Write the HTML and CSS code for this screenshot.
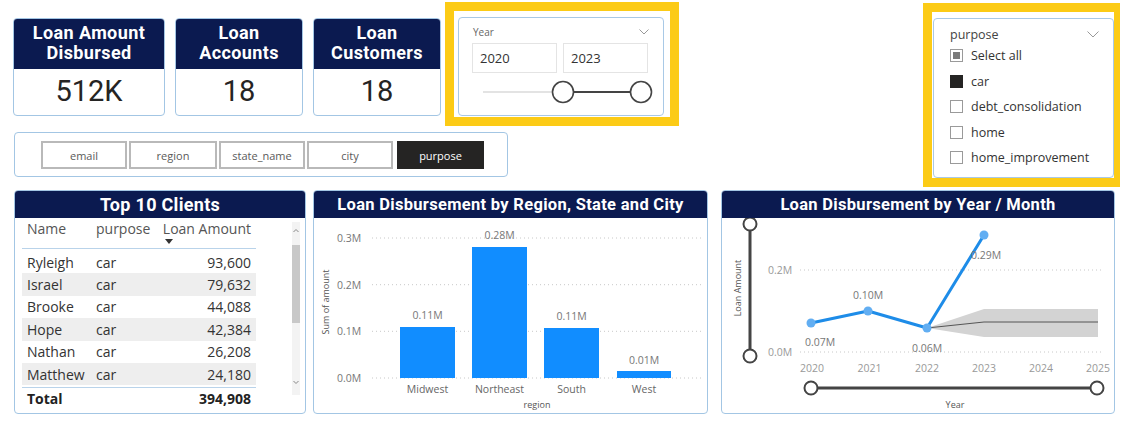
FILE: index.html
```html
<!DOCTYPE html>
<html>
<head>
<meta charset="utf-8">
<link rel="stylesheet" href="styles.css">
</head>
<body>
<div class="page">
  <div class="top">
    <div class="left">
      <div class="row1">
        <div class="kpis">
          <div class="kpi kpi-wide"><div class="kpi-head">Loan Amount<br>Disbursed</div><div class="kpi-val">512K</div></div>
          <div class="kpi"><div class="kpi-head">Loan<br>Accounts</div><div class="kpi-val">18</div></div>
          <div class="kpi"><div class="kpi-head">Loan<br>Customers</div><div class="kpi-val">18</div></div>
        </div>
        <div class="hl hl-year">
          <div class="slicer year-slicer">
            <div class="sl-head"><span class="year-label">Year</span><svg class="chev" width="10" height="6" viewBox="0 0 10 6"><path d="M0.5 0.5 L5 5 L9.5 0.5"/></svg></div>
            <div class="inputs"><div class="inp">2020</div><div class="inp">2023</div></div>
            <svg class="range" width="186" height="30" viewBox="0 0 186 30">
              <line class="track" x1="11" y1="19" x2="91" y2="19"/>
              <line class="sel" x1="91" y1="19" x2="169" y2="19"/>
              <circle class="handle" cx="91" cy="19" r="10.5"/>
              <circle class="handle" cx="169" cy="19" r="10.5"/>
            </svg>
          </div>
        </div>
      </div>
      <div class="btnbar">
        <span class="btn w86">email</span>
        <span class="btn w88">region</span>
        <span class="btn w86">state_name</span>
        <span class="btn w86">city</span>
        <span class="btn w87 btn-on">purpose</span>
      </div>
    </div>
    <div class="hl hl-purpose">
      <div class="slicer purpose-slicer">
        <div class="sl-head"><span class="p-label">purpose</span><svg class="chev" width="12" height="7" viewBox="0 0 12 7"><path d="M0.5 0.5 L6 6 L11.5 0.5"/></svg></div>
        <div class="item"><span class="cb cb-part"></span>Select all</div>
        <div class="item"><span class="cb cb-on"></span>car</div>
        <div class="item"><span class="cb"></span>debt_consolidation</div>
        <div class="item"><span class="cb"></span>home</div>
        <div class="item"><span class="cb"></span>home_improvement</div>
      </div>
    </div>
  </div>

  <div class="bottom">
    <div class="panel p-table">
      <div class="p-head t-head">Top 10 Clients</div>
      <div class="t-body">
        <div class="tbl">
          <div class="tr thead"><span>Name</span><span>purpose</span><span class="sortcol">Loan Amount<i class="sort"></i></span></div>
          <div class="rows">
            <div class="tr"><span>Ryleigh</span><span>car</span><span class="num">93,600</span></div>
            <div class="tr alt"><span>Israel</span><span>car</span><span class="num">79,632</span></div>
            <div class="tr"><span>Brooke</span><span>car</span><span class="num">44,088</span></div>
            <div class="tr alt"><span>Hope</span><span>car</span><span class="num">42,384</span></div>
            <div class="tr"><span>Nathan</span><span>car</span><span class="num">26,208</span></div>
            <div class="tr alt"><span>Matthew</span><span>car</span><span class="num">24,180</span></div>
          </div>
          <div class="tr total"><span>Total</span><span></span><span class="num">394,908</span></div>
        </div>
        <div class="scroll">
          <svg class="sarrow" width="8" height="16" viewBox="0 0 8 16"><path d="M1.5 10 L4 7.5 L6.5 10"/></svg>
          <div class="thumb"></div>
          <div class="sfill"></div>
          <svg class="sarrow" width="8" height="16" viewBox="0 0 8 16"><path d="M1.5 2 L4 4.5 L6.5 2"/></svg>
        </div>
      </div>
    </div>

    <div class="panel p-bar">
      <div class="p-head">Loan Disbursement by Region, State and City</div>
      <svg class="chart" width="393" height="195" viewBox="314 218 393 195">
        <g class="grid">
          <line x1="372" y1="238" x2="702" y2="238"/>
          <line x1="372" y1="284.7" x2="702" y2="284.7"/>
          <line x1="372" y1="331.3" x2="702" y2="331.3"/>
          <line x1="372" y1="378" x2="702" y2="378"/>
        </g>
        <g class="ylab">
          <text x="337" y="238">0.3M</text>
          <text x="337" y="284.7">0.2M</text>
          <text x="337" y="331.3">0.1M</text>
          <text x="337" y="378">0.0M</text>
        </g>
        <g class="bars">
          <rect x="400" y="327" width="55" height="51"/>
          <rect x="472" y="247" width="55" height="131"/>
          <rect x="544" y="328" width="55" height="50"/>
          <rect x="617" y="371" width="54" height="7"/>
        </g>
        <g class="vlab">
          <text x="427.5" y="315">0.11M</text>
          <text x="499.5" y="235">0.28M</text>
          <text x="571.5" y="316">0.11M</text>
          <text x="644" y="360">0.01M</text>
        </g>
        <g class="xlab">
          <text x="427.5" y="389">Midwest</text>
          <text x="499.5" y="389">Northeast</text>
          <text x="571.5" y="389">South</text>
          <text x="644" y="389">West</text>
        </g>
        <text class="axt" x="537" y="404">region</text>
        <text class="axt" transform="translate(325 302) rotate(-90)">Sum of amount</text>
      </svg>
    </div>

    <div class="panel p-line">
      <div class="p-head">Loan Disbursement by Year / Month</div>
      <svg class="chart" width="392" height="195" viewBox="722 218 392 195">
        <g class="grid">
          <line x1="800" y1="270" x2="1102" y2="270"/>
          <line x1="800" y1="352" x2="1102" y2="352"/>
        </g>
        <g class="ylab lt">
          <text x="768" y="270">0.2M</text>
          <text x="768" y="352">0.0M</text>
        </g>
        <g class="xlab lt">
          <text x="812" y="368">2020</text>
          <text x="869.5" y="368">2021</text>
          <text x="927" y="368">2022</text>
          <text x="984" y="368">2023</text>
          <text x="1041" y="368">2024</text>
          <text x="1098" y="368">2025</text>
        </g>
        <polygon class="band" points="927,328 984,309 1098,309 1098,337 984,337"/>
        <polyline class="fc" points="927,328 984,322 1098,322"/>
        <polyline class="ln" points="811,323 868,311 927,328 984,235"/>
        <g class="pts">
          <circle cx="811" cy="323" r="4.5"/>
          <circle cx="868" cy="311" r="4.5"/>
          <circle cx="927" cy="328" r="4.5"/>
          <circle cx="984" cy="235" r="4.5"/>
        </g>
        <g class="vlab">
          <text x="820" y="342">0.07M</text>
          <text x="868" y="295">0.10M</text>
          <text x="927" y="348">0.06M</text>
          <text x="986" y="255">0.29M</text>
        </g>
        <line class="sl" x1="750" y1="224" x2="750" y2="356"/>
        <circle class="sh" cx="750" cy="224" r="6.5"/>
        <circle class="sh" cx="750" cy="356" r="6.5"/>
        <line class="sl" x1="811" y1="388" x2="1097" y2="388"/>
        <circle class="sh" cx="811" cy="388" r="6.5"/>
        <circle class="sh" cx="1097" cy="388" r="6.5"/>
        <text class="axt" x="955" y="404">Year</text>
        <text class="axt" transform="translate(737 288) rotate(-90)">Loan Amount</text>
      </svg>
    </div>
  </div>
</div>
</body>
</html>
```
FILE: styles.css
```css
* { box-sizing: border-box; }
body {
  margin: 0;
  width: 1130px;
  height: 436px;
  overflow: hidden;
  background: #fff;
  color: #333;
  font-family: "Open Sans", "Noto Sans", sans-serif;
}
.page { padding-left: 13px; }

/* ---------- top area ---------- */
.top { display: flex; height: 190px; padding-right: 10px; }
.left { display: flex; flex-direction: column; }
.row1 { display: flex; align-items: flex-start; }
.kpis { display: flex; gap: 10px; margin-top: 18px; }
.kpi {
  width: 128px; height: 98px;
  border: 1px solid #a3c6e4; border-radius: 4px;
  overflow: hidden;
  display: flex; flex-direction: column;
}
.kpi-wide { width: 152px; }
.kpi-head {
  height: 50px;
  background: #0b1a50; color: #fff;
  font-family: Roboto, sans-serif; font-weight: 700;
  font-size: 18px; line-height: 20px; letter-spacing: 0.4px;
  text-align: center; padding-top: 4px;
}
.kpi-val {
  flex: 1;
  display: flex; align-items: center; justify-content: center;
  font-family: Roboto, sans-serif; font-size: 29px; color: #252423;
  padding-bottom: 3px;
}

/* highlight frames */
.hl { border: 9px solid #fccb16; }
.hl-year {
  width: 234px; height: 124px;
  margin: 2px 0 0 4px;
  padding: 6px 0 0 4px;
}
.hl-purpose {
  margin: 3px 0 0 auto;
  width: 197px; height: 184px;
  border-right-width: 6px;
  padding: 6px 0 0 1px;
}
.slicer {
  border: 1px solid #a9c9e6; border-radius: 4px; background: #fff;
}
.sl-head { display: flex; align-items: center; justify-content: space-between; }
.chev path { fill: none; stroke: #999; stroke-width: 1; }

.year-slicer { width: 206px; height: 99px; padding: 6px 14px 0 13px; }
.year-slicer .sl-head { height: 16px; padding-left: 1px; padding-right: 0; }
.year-label { font-size: 10px; color: #666; }
.inputs { display: flex; gap: 6px; margin-top: 3px; }
.inp {
  width: 85px; height: 30px;
  border: 1px solid #e4e4e4;
  font-size: 13px; color: #333;
  display: flex; align-items: center; padding-left: 7px;
}
.range { display: block; overflow: visible; }
.range .track { stroke: #e3e3e3; stroke-width: 2; }
.range .sel { stroke: #444; stroke-width: 2; }
.range .handle { fill: #fff; stroke: #444; stroke-width: 1.6; }

.purpose-slicer { width: 181px; height: 160px; padding: 6px 14px 0 16px; }
.purpose-slicer .sl-head { height: 18px; }
.p-label { font-size: 12.5px; color: #444; }
.item {
  height: 25.5px;
  display: flex; align-items: center; gap: 8px;
  font-size: 12.5px; color: #333;
}
.cb {
  width: 13px; height: 13px;
  border: 1px solid #9a9a9a; background: #fff;
  display: flex; align-items: center; justify-content: center;
}
.cb-part::after { content: ""; width: 7px; height: 7px; background: #7a7a7a; }
.cb-on { background: #252423; border-color: #252423; }

/* button bar */
.btnbar {
  width: 494px; height: 45px;
  margin: 6px 0 0 1px;
  border: 1px solid #a3c6e4; border-radius: 4px;
  padding: 8px 0 0 26px;
  display: flex; gap: 2px;
}
.btn {
  height: 28px;
  border: 2px solid #b9b9b9;
  display: flex; align-items: center; justify-content: center;
  font-size: 11px; color: #5a5a5a; background: #fff;
}
.w86 { width: 86px; }
.w87 { width: 87px; }
.w88 { width: 88px; }
.btn-on { margin-left: 2px; background: #252423; border-color: #252423; color: #fff; }

/* ---------- bottom panels ---------- */
.bottom { display: flex; margin-left: 1px; }
.panel {
  height: 224px;
  border: 1px solid #a3c6e4; border-radius: 4px;
  overflow: hidden;
  display: flex; flex-direction: column;
}
.p-table { width: 292px; margin-right: 7px; }
.p-bar { width: 395px; margin-right: 13px; }
.p-line { width: 394px; }
.p-head {
  height: 27px; flex: none;
  background: #0b1a50; color: #fff;
  font-family: Roboto, sans-serif; font-weight: 700; font-size: 16.5px;
  letter-spacing: 0.3px;
  display: flex; align-items: center; justify-content: center;
}
.t-head { font-size: 18px; }

.t-body { display: flex; flex: 1; }
.tbl { width: 234px; margin-left: 7px; font-size: 14px; }
.tr {
  display: grid; grid-template-columns: 69px 1fr auto;
  height: 22.4px; align-items: center;
}
.tr > span { padding: 0 5px; white-space: nowrap; }
.thead {
  height: 31px; align-items: start; padding-top: 1px;
  border-bottom: 1px solid #b9d3ea; color: #555;
}
.sortcol { display: flex; flex-direction: column; align-items: flex-start; line-height: 20px; }
.sort {
  width: 0; height: 0; margin-left: 2px;
  border-left: 4px solid transparent; border-right: 4px solid transparent;
  border-top: 5px solid #333;
}
.thead > span { line-height: 20px; }
.rows { margin-top: 2px; }
.alt { background: #eeeeee; }
.num { text-align: right; }
.total {
  margin-top: 1.5px; height: 22px;
  border-top: 1px solid #b9d3ea;
  font-weight: 700; color: #222;
}
.scroll {
  width: 8px; height: 173px;
  margin: 4px 0 0 36px;
  background: #f3f3f3;
  display: flex; flex-direction: column;
}
.sarrow { display: block; flex: none; }
.sarrow path { fill: none; stroke: #888; stroke-width: 1; }
.thumb { height: 78px; margin-top: 7px; background: #c8c8c8; flex: none; }
.sfill { flex: 1; }

/* charts */
.chart { display: block; }
.chart text { font-family: "Open Sans", "Noto Sans", sans-serif; font-size: 10.5px; fill: #666; dominant-baseline: central; }
.grid line { stroke: #c8c8c8; stroke-width: 1; stroke-dasharray: 1 3; }
.ylab text { text-anchor: start; fill: #777; }
.lt text { fill: #999; }
.xlab text { text-anchor: middle; }
.vlab text { text-anchor: middle; fill: #777; }
.bars rect { fill: #118dff; }
.axt { text-anchor: middle; font-size: 9px !important; fill: #555 !important; }
.band { fill: #d3d3d3; }
.fc { fill: none; stroke: #555; stroke-width: 1; }
.ln { fill: none; stroke: #1e8ce8; stroke-width: 3; stroke-linejoin: round; }
.pts circle { fill: #62aef2; }
.sl { stroke: #444; stroke-width: 3; }
.sh { fill: #fff; stroke: #444; stroke-width: 2; }
```
